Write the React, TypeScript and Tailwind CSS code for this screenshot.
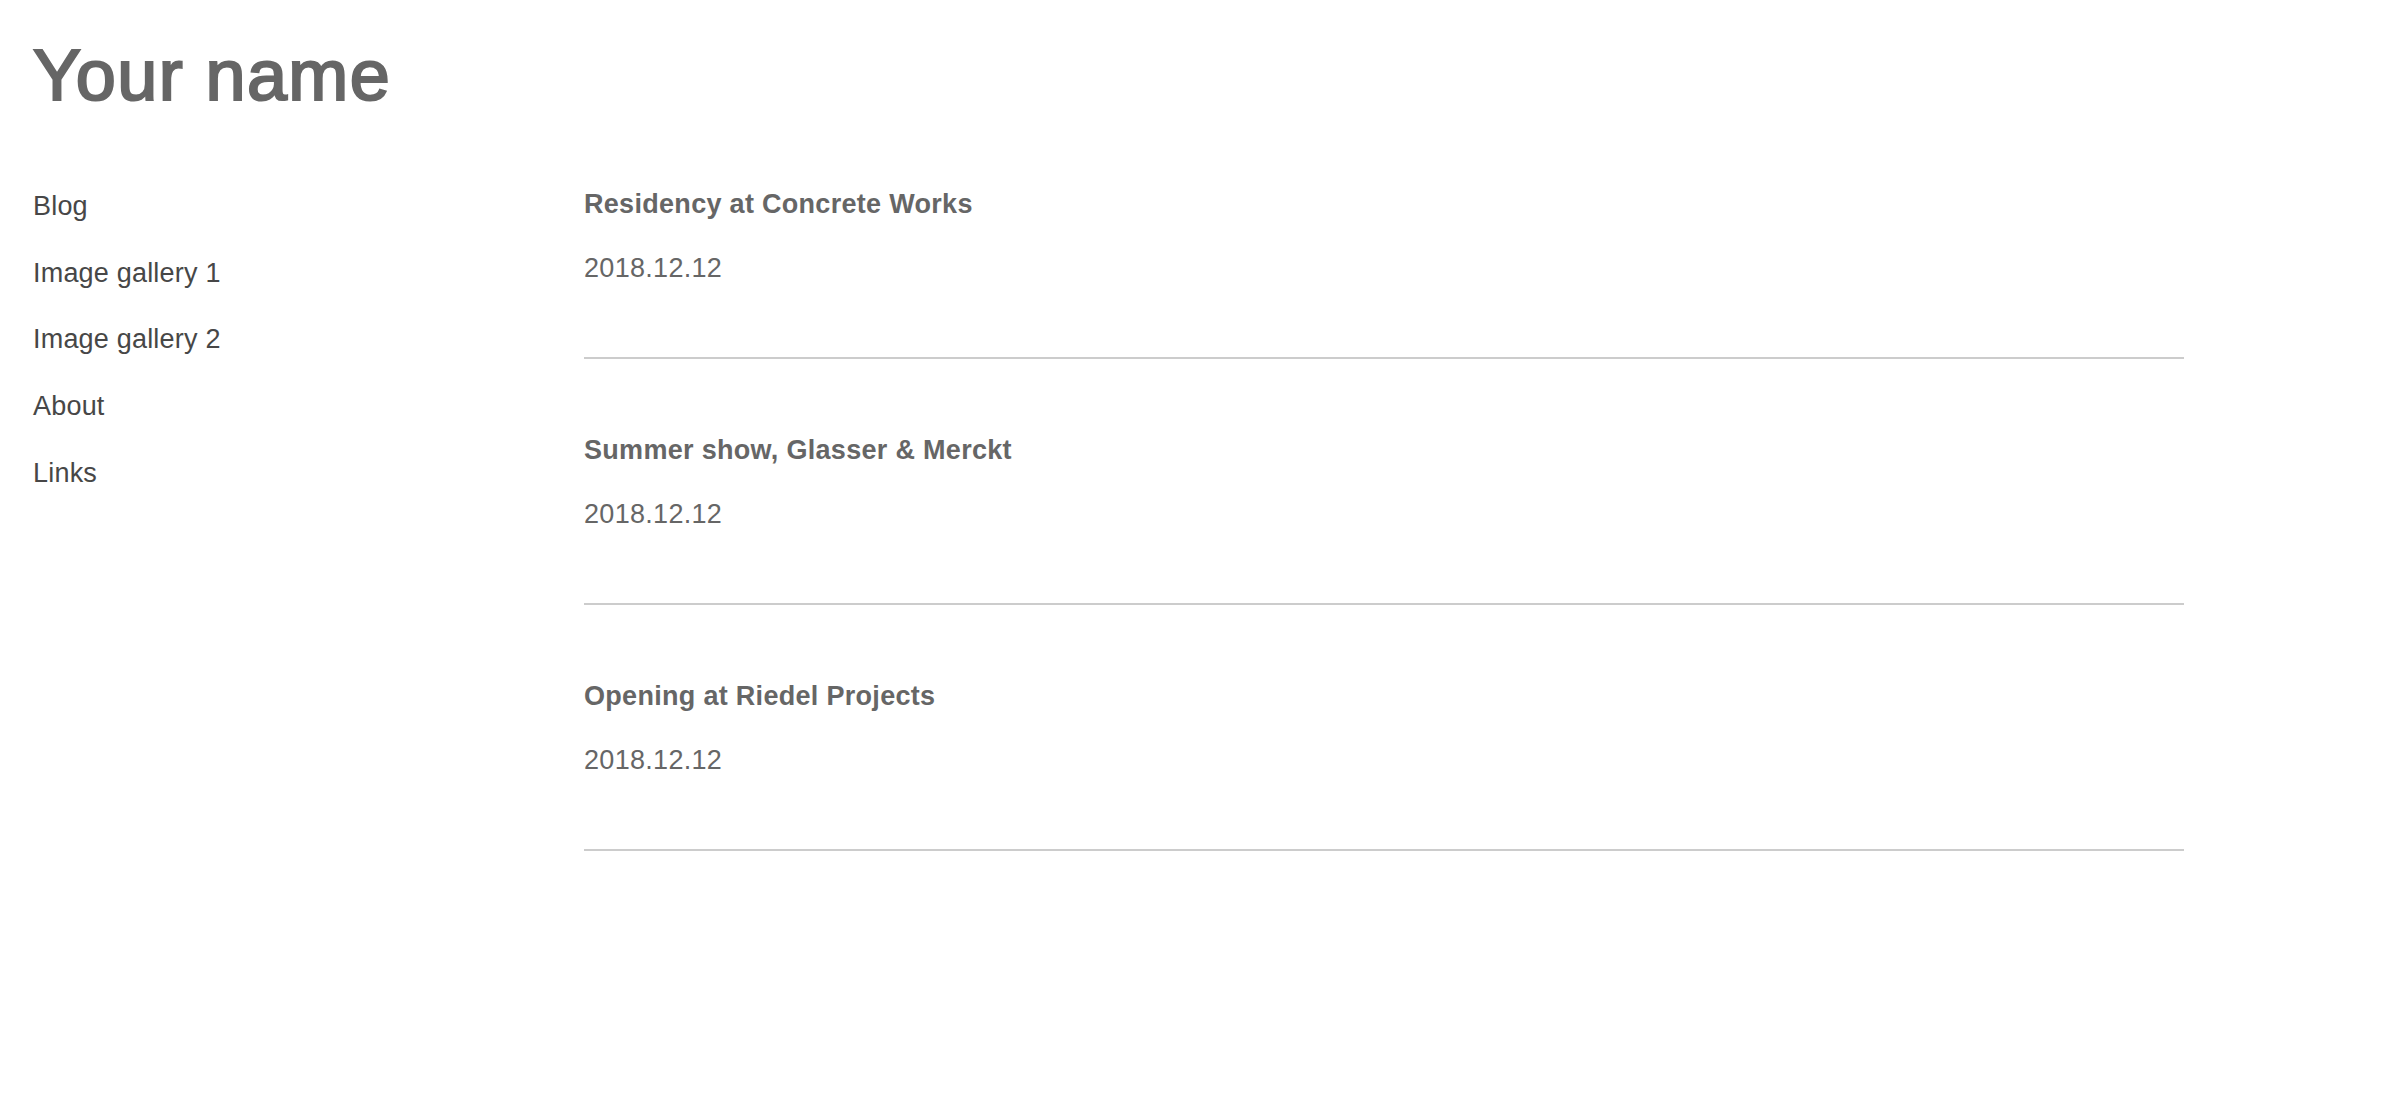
const navItems = ["Blog", "Image gallery 1", "Image gallery 2", "About", "Links"];

const posts = [
  { title: "Residency at Concrete Works", date: "2018.12.12" },
  { title: "Summer show, Glasser & Merckt", date: "2018.12.12" },
  { title: "Opening at Riedel Projects", date: "2018.12.12" },
];

export default function App() {
  return (
    <div
      className="min-h-screen bg-white px-[33px] pt-[32px] text-[#666666]"
      style={{ fontFamily: '"Liberation Sans", Arial, Helvetica, sans-serif' }}
    >
      <h1 className="text-[72px] leading-[86px] font-normal tracking-[1.4px] text-[#666666] [-webkit-text-stroke:2.2px_#666666]">
        Your name
      </h1>

      <div className="mt-[70px] flex">
        <nav className="w-[551px] shrink-0 pt-[2px]">
          <ul className="flex flex-col gap-[34.7px]">
            {navItems.map((item) => (
              <li key={item}>
                <a
                  href="#"
                  className="text-[27px] leading-[32px] tracking-[0.2px] text-[#474747]"
                >
                  {item}
                </a>
              </li>
            ))}
          </ul>
        </nav>

        <main className="w-[1600px]">
          {posts.map((post, i) => (
            <article
              key={post.title}
              className={`border-b-2 border-[#cccccc] pb-[73px] ${i > 0 ? "pt-[75px]" : ""}`}
            >
              <h2 className="text-[27px] leading-[32px] font-bold tracking-[0.3px] text-[#666666]">
                {post.title}
              </h2>
              <p className="mt-[32px] text-[27px] leading-[32px] tracking-[0.3px] text-[#666666]">
                {post.date}
              </p>
            </article>
          ))}
        </main>
      </div>
    </div>
  );
}
